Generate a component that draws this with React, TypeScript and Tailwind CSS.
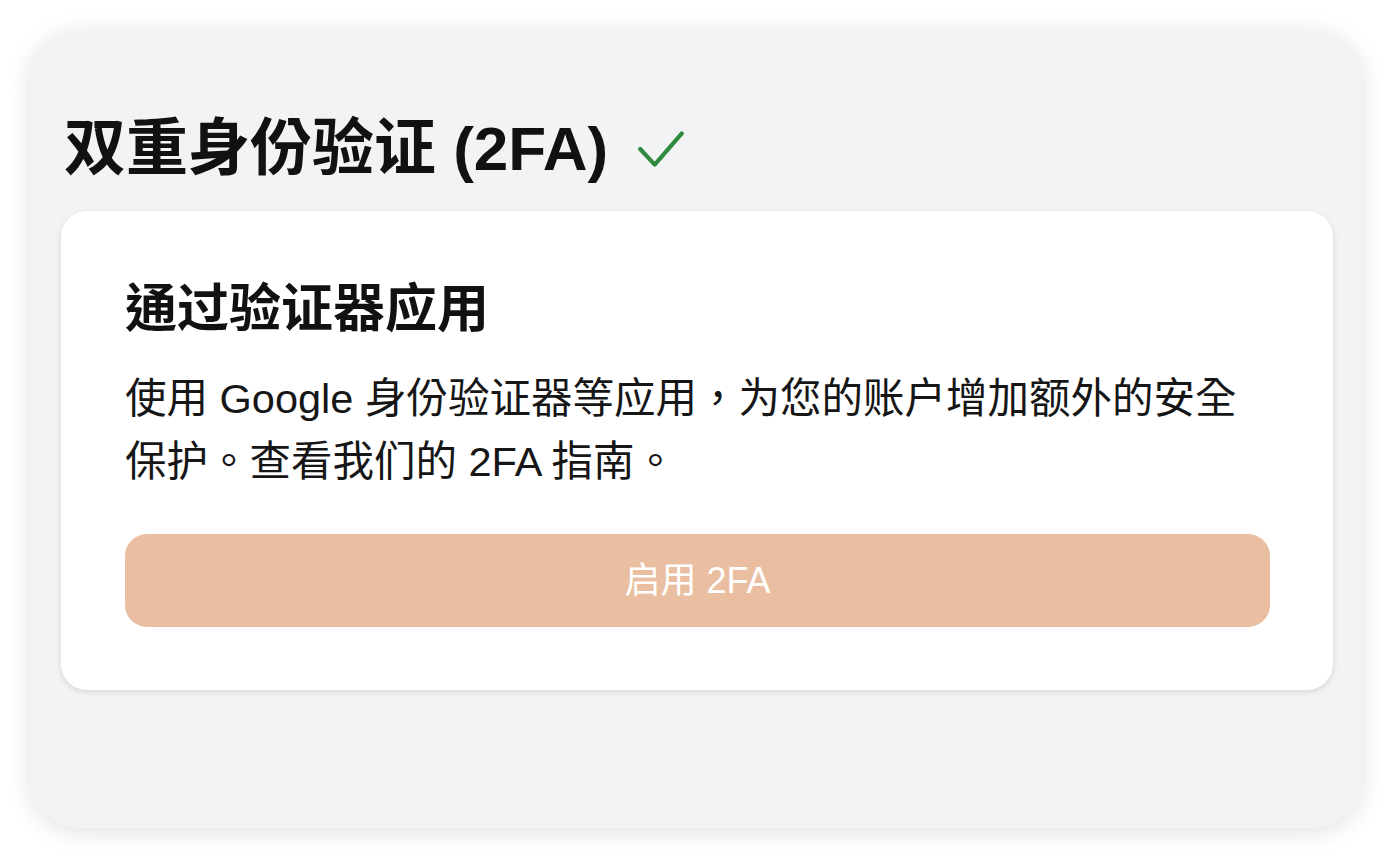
export default function App() {
  return (
    <div className="min-h-[858px] w-full bg-white p-[30px]">
      <div
        className="h-[798px] w-[1332px] rounded-[50px] bg-[#f2f3f5] pl-[31px] pr-[29px] pt-[88px] shadow-[0_4px_24px_rgba(0,0,0,0.12)]"
        style={{ fontFamily: '"Liberation Sans", "Noto Sans CJK TC", sans-serif' }}
      >
        <div className="flex items-center pl-[3px]">
          <h2 className="text-[62px] leading-none font-bold text-[#111]">双重身份验证 (2FA)</h2>
          <svg
            className="ml-[28px] mt-[2px] h-[50px] w-[50px] text-[#2f8a3e]"
            viewBox="0 0 24 24"
            fill="none"
            stroke="currentColor"
            strokeWidth="2"
            strokeLinecap="round"
            strokeLinejoin="round"
          >
            <path d="M2 11.5l7 7.5L22 4" />
          </svg>
        </div>

        <div className="mt-[31px] rounded-[26px] bg-white pl-[64px] pr-[63px] pt-[72px] pb-[63px] shadow-[0_2px_6px_rgba(0,0,0,0.12)]">
          <h3 className="text-[52px] leading-none font-bold text-[#111]">通过验证器应用</h3>
          <p className="mt-[32px] text-[41.5px] leading-[63px] text-[#161616]">
            使用 Google 身份验证器等应用，为您的账户增加额外的安全保护。查看我们的 2FA 指南。
          </p>
          <button className="mt-[41px] flex h-[93px] w-full items-center justify-center rounded-[22px] bg-[#e9bea1] text-[36px] text-white">
            启用 2FA
          </button>
        </div>
      </div>
    </div>
  )
}
